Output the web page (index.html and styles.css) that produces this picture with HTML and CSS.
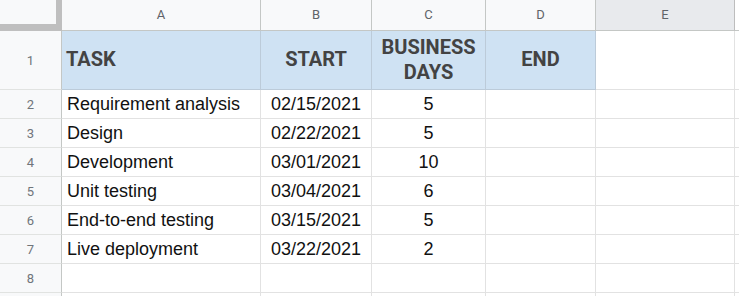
FILE: index.html
```html
<!DOCTYPE html>
<html lang="en">
<head>
<meta charset="utf-8">
<title>Project schedule</title>
<link rel="stylesheet" href="styles.css">
</head>
<body>
<div class="sheet">
  <div class="corner"></div>
  <div class="colhead">A</div>
  <div class="colhead">B</div>
  <div class="colhead">C</div>
  <div class="colhead">D</div>
  <div class="colhead sel">E</div>
  <div class="colhead rest"></div>

  <div class="rowhead">1</div>
  <div class="cell hdr left">TASK</div>
  <div class="cell hdr">START</div>
  <div class="cell hdr">BUSINESS<br>DAYS</div>
  <div class="cell hdr">END</div>
  <div class="cell hdr-after"></div>
  <div class="cell rest"></div>

  <div class="rowhead">2</div>
  <div class="cell left">Requirement analysis</div>
  <div class="cell">02/15/2021</div>
  <div class="cell">5</div>
  <div class="cell"></div>
  <div class="cell"></div>
  <div class="cell rest"></div>

  <div class="rowhead">3</div>
  <div class="cell left">Design</div>
  <div class="cell">02/22/2021</div>
  <div class="cell">5</div>
  <div class="cell"></div>
  <div class="cell"></div>
  <div class="cell rest"></div>

  <div class="rowhead">4</div>
  <div class="cell left">Development</div>
  <div class="cell">03/01/2021</div>
  <div class="cell">10</div>
  <div class="cell"></div>
  <div class="cell"></div>
  <div class="cell rest"></div>

  <div class="rowhead">5</div>
  <div class="cell left">Unit testing</div>
  <div class="cell">03/04/2021</div>
  <div class="cell">6</div>
  <div class="cell"></div>
  <div class="cell"></div>
  <div class="cell rest"></div>

  <div class="rowhead">6</div>
  <div class="cell left">End-to-end testing</div>
  <div class="cell">03/15/2021</div>
  <div class="cell">5</div>
  <div class="cell"></div>
  <div class="cell"></div>
  <div class="cell rest"></div>

  <div class="rowhead">7</div>
  <div class="cell left">Live deployment</div>
  <div class="cell">03/22/2021</div>
  <div class="cell">2</div>
  <div class="cell"></div>
  <div class="cell"></div>
  <div class="cell rest"></div>

  <div class="rowhead">8</div>
  <div class="cell left"></div>
  <div class="cell"></div>
  <div class="cell"></div>
  <div class="cell"></div>
  <div class="cell"></div>
  <div class="cell rest"></div>

  <div class="rowhead"></div>
  <div class="cell left"></div>
  <div class="cell"></div>
  <div class="cell"></div>
  <div class="cell"></div>
  <div class="cell"></div>
  <div class="cell rest"></div>
</div>
</body>
</html>
```

FILE: styles.css
```css
* { box-sizing: border-box; }
html, body { margin: 0; padding: 0; background: #fff; overflow: hidden; }

.sheet {
  display: grid;
  grid-template-columns: 62px 199px 111px 114px 110px 139px 1fr;
  grid-template-rows: 31px 59px repeat(7, 29px) 29px;
  width: 739px;
  height: 296px;
  overflow: hidden;
}

.corner {
  background: #f8f9fa;
  border-right: 6px solid #bfbfbf;
  border-bottom: 7px solid #bfbfbf;
}

.colhead {
  background: #f8f9fa;
  border-right: 1px solid #c4c7c5;
  border-bottom: 1px solid #c4c7c5;
  display: flex;
  align-items: center;
  justify-content: center;
  font-family: Roboto, "Liberation Sans", sans-serif;
  font-size: 13px;
  color: #5f6368;
  padding-bottom: 1px;
}
.colhead.sel { background: #e8eaed; border-right-color: #bdbdbd; }
.colhead.rest { background: #fff; border-right: 0; }

.rowhead {
  background: #f8f9fa;
  border-right: 1px solid #c4c7c5;
  border-bottom: 1px solid #e1e3e1;
  display: flex;
  align-items: center;
  justify-content: center;
  font-family: Roboto, "Liberation Sans", sans-serif;
  font-size: 13px;
  color: #70757a;
}

.cell {
  border-right: 1px solid #e2e2e2;
  border-bottom: 1px solid #e2e2e2;
  display: flex;
  align-items: flex-end;
  justify-content: center;
  font-family: "Liberation Sans", Arial, sans-serif;
  font-size: 18px;
  line-height: 20px;
  color: #111;
  padding: 0 5px 4px;
  white-space: nowrap;
}
.cell.left { justify-content: flex-start; }
.cell.rest { border-right: 0; }

.cell.hdr {
  background: #cfe2f3;
  border-right-color: #bccbd9;
  border-bottom-color: #bccbd9;
  align-items: center;
  text-align: center;
  font-family: Roboto, "Liberation Sans", sans-serif;
  font-weight: 700;
  font-size: 20px;
  line-height: 25px;
  color: #434343;
  padding: 0 4px 1px;
  white-space: normal;
}
.cell.hdr.left { text-align: left; }
```
